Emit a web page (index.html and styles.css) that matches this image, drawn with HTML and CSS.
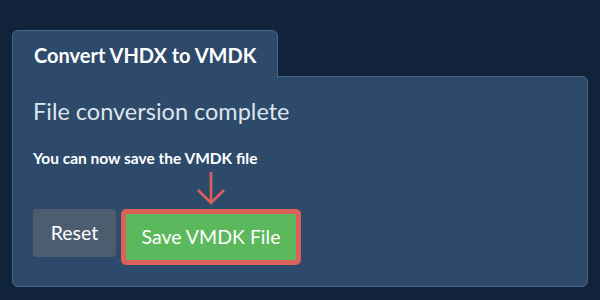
FILE: index.html
```html
<!DOCTYPE html>
<html lang="en">
<head>
  <meta charset="UTF-8">
  <meta name="viewport" content="width=device-width, initial-scale=1.0">
  <title>Convert VHDX to VMDK</title>
  <link rel="stylesheet" href="styles.css">
</head>
<body>
  <div class="converter">
    <div class="tabs">
      <div class="tab">Convert VHDX to VMDK</div>
    </div>
    <div class="panel">
      <h2 class="status">File conversion complete</h2>
      <p class="hint">You can now save the VMDK file</p>
      <div class="actions">
        <button class="button reset">Reset</button>
        <div class="save-wrap">
          <svg class="arrow" width="30" height="38" viewBox="0 0 30 38">
            <path d="M15 4 V35 M2 22 L15 35 L28 22" fill="none" stroke="#dc615a" stroke-width="2.6"/>
          </svg>
          <button class="button save">Save VMDK File</button>
        </div>
      </div>
    </div>
  </div>
</body>
</html>
```

FILE: styles.css
```css
body {
  margin: 0;
  padding: 30px 12px 0 12px;
  background-color: #11233a;
  font-family: Lato, "Open Sans", sans-serif;
  color: #ffffff;
}
.tabs {
  display: flex;
}
.tab {
  position: relative;
  z-index: 1;
  margin-bottom: -1px;
  padding: 11px 21px 9px 21px;
  line-height: 26px;
  font-size: 20px;
  font-weight: 700;
  background: #2d4a6b;
  border: 1px solid #4b6585;
  border-bottom: none;
  border-radius: 6px 6px 0 0;
}
.panel {
  background: #2d4a6b;
  border: 1px solid #4b6585;
  border-radius: 0 6px 6px 6px;
  padding: 19px 20px 20px 20px;
  height: 170px;
}
.status {
  margin: 0;
  font-size: 23.5px;
  font-weight: 400;
  line-height: 31px;
  color: #dfe5ec;
}
.hint {
  margin: 22px 0 0 0;
  font-size: 15.5px;
  font-weight: 700;
  line-height: 18px;
}
.actions {
  display: flex;
  align-items: flex-start;
  gap: 5px;
  margin-top: 42px;
}
.button {
  font-family: Lato, "Open Sans", sans-serif;
  font-size: 19.5px;
  line-height: 24px;
  color: #ffffff;
  border: none;
  cursor: pointer;
}
.reset {
  width: 83px;
  height: 48px;
  background: #4d5d70;
  border-radius: 4px;
}
.save-wrap {
  position: relative;
}
.arrow {
  position: absolute;
  bottom: 100%;
  left: 50%;
  margin-left: -15px;
  margin-bottom: 3px;
}
.save {
  width: 180px;
  height: 56px;
  background: #5cb85c;
  border: 5px solid #dc615a;
  border-radius: 5px;
}
```
